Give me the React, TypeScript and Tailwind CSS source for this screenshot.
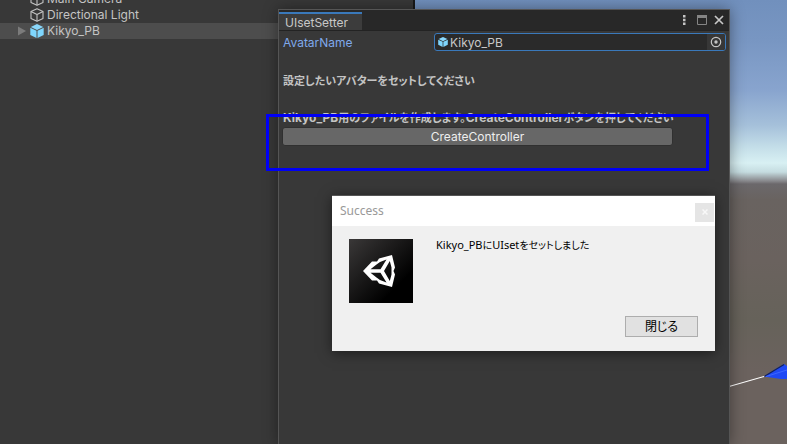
import React from 'react';

const unityFont = "font-['Inter','Noto_Sans_CJK_JP',sans-serif]";
const dialogFont = "font-['Noto_Sans','Noto_Sans_CJK_JP',sans-serif]";

function CubeOutline() {
  return (
    <svg viewBox="0 0 14 14" className="size-3.5 shrink-0" fill="none" stroke="#c4c4c4" strokeWidth="1.1" strokeLinejoin="round" aria-hidden="true">
      <path d="M7 .8 13 3.6v6.8L7 13.3 1 10.4V3.6Z" />
      <path d="M1 3.6 7 6.6l6-3M7 6.6v6.7" />
    </svg>
  );
}

function CubeSolid({ className }: { className: string }) {
  return (
    <svg viewBox="0 0 14 14" className={className} aria-hidden="true">
      <path d="M7 0 13.2 2.9 7 5.9.8 2.9Z" fill="#8ad8fb" />
      <path d="M.3 3.7 6.5 6.7V14L.3 11Z" fill="#7fd6fd" />
      <path d="M13.7 3.7 7.5 6.7V14l6.2-3Z" fill="#7fd6fd" />
    </svg>
  );
}

function HierarchyRow({ name, selected = false }: { name: string; selected?: boolean }) {
  return (
    <li className={`flex h-4 shrink-0 items-center pl-[18px] text-[12px] leading-4 text-[#c4c4c4] ${selected ? 'bg-[#4d4d4d]' : ''}`}>
      <span className="flex w-3 shrink-0">
        {selected && (
          <svg viewBox="0 0 8 10" className="h-2.5 w-2" aria-hidden="true">
            <path d="M0 .5 8 5 0 9.5Z" fill="#7b7b7b" />
          </svg>
        )}
      </span>
      {selected ? <CubeSolid className="size-3.5 shrink-0" /> : <CubeOutline />}
      <span className="pl-[3px]">{name}</span>
    </li>
  );
}

function Hierarchy() {
  return (
    <section className="w-[415px] shrink-0 border-r-2 border-[#191919] bg-[#383838]">
      <ul className="-mt-[9px] flex flex-col">
        <HierarchyRow name="Main Camera" />
        <HierarchyRow name="Directional Light" />
        <HierarchyRow name="Kikyo_PB" selected />
      </ul>
    </section>
  );
}

function SceneView() {
  return (
    <section className="flex flex-1 items-end justify-end bg-[linear-gradient(to_bottom,#7190bd_0px,#7896c2_40px,#88a4ce_90px,#a5c0da_125px,#c5dfe9_148px,#d8f0f3_163px,#c5dce0_172px,#88888c_181px,#6b686b_184px,#696360_200px,#6a625e_260px,#66625a_320px,#6b625e_370px,#6b625e_444px)]">
      <svg viewBox="0 0 58 30" className="mb-[52px] h-[30px] w-[58px]" aria-hidden="true">
        <path d="M0 24.5 35 14.5" stroke="#fff" strokeWidth="1.1" />
        <path d="M35 14.5 55 2l3 2v13H52Z" fill="#1f49f5" />
        <path d="M36 14 55 2.5" stroke="#10205f" strokeWidth="1.2" />
        <path d="M37 14.5 58 8" stroke="#3d67ff" />
      </svg>
    </section>
  );
}

function SetterWindow() {
  return (
    <section className="absolute top-[9px] right-[57px] -bottom-px left-[278px] flex flex-col border border-[#555] bg-[#383838] shadow-[0_0_14px_rgba(0,0,0,0.4)]">
      <header className="flex h-[21px] shrink-0 items-end border-b border-[#232323] bg-[#282828]">
        <h1 className="h-[18px] w-[83px] border-t-2 border-[#3a79bb] bg-[#3c3c3c] pl-1.5 text-[12px] leading-[18px] text-[#c8c8c8]">UIsetSetter</h1>
        <div className="ml-auto flex h-5 items-center gap-[11px] pr-[5px]">
          <button type="button" aria-label="Menu" className="flex">
            <svg viewBox="0 0 3 10" className="h-2.5 w-[3px]" fill="#c4c4c4" aria-hidden="true">
              <path d="M0 0h2.5v2.5H0ZM0 3.8h2.5v2.5H0ZM0 7.5h2.5V10H0Z" />
            </svg>
          </button>
          <button type="button" aria-label="Maximize" className="flex">
            <svg viewBox="0 0 10 10" className="size-2.5" aria-hidden="true">
              <path d="M.5 .5h9v9h-9Z" fill="none" stroke="#858585" />
              <path d="M0 0h10v3H0Z" fill="#858585" />
            </svg>
          </button>
          <button type="button" aria-label="Close" className="-ml-1 flex">
            <svg viewBox="0 0 10 10" className="size-2.5" stroke="#c8c8c8" strokeWidth="1.7" aria-hidden="true">
              <path d="M1 1l8 8M9 1 1 9" />
            </svg>
          </button>
        </div>
      </header>
      <div className="flex flex-col px-[3px] pt-0.5 text-[12px]">
        <div className="flex h-[18px] items-center">
          <label htmlFor="avatar" className="w-[152px] shrink-0 pt-0.5 pl-px leading-[18px] text-[#7fa9ec]">AvatarName</label>
          <div className="flex h-[18px] min-w-0 flex-1 items-center overflow-hidden rounded-[3px] border border-[#3a79bb] bg-[#2a2a2a] pl-[3px]">
            <CubeSolid className="size-2.5 shrink-0" />
            <input id="avatar" defaultValue="Kikyo_PB" className="h-4 min-w-0 flex-1 bg-transparent pt-px pl-0.5 text-[#c8c8c8] outline-none" />
            <button type="button" aria-label="Select object" className="flex h-4 w-[18px] items-center justify-center bg-[#373737]">
              <svg viewBox="0 0 12 12" className="size-3" aria-hidden="true">
                <circle cx="6" cy="6" r="4.7" fill="none" stroke="#c4c4c4" strokeWidth="1.2" />
                <circle cx="6" cy="6" r="1.7" fill="#c4c4c4" />
              </svg>
            </button>
          </div>
        </div>
        <p className="mt-5 h-[18px] pl-px text-[11px] leading-5 font-bold whitespace-nowrap text-[#c4c4c4] [font-feature-settings:'palt']">設定したいアバターをセットしてください</p>
        <p className="mt-5 h-[18px] pl-px text-[11px] leading-[18px] font-bold whitespace-nowrap text-[#c4c4c4] [font-feature-settings:'palt']">
          <span className="text-[12px]">Kikyo_PB</span>用のファイルを作成します。<span className="text-[12px]">CreateController</span>ボタンを押してください
        </p>
        <button type="button" className="mr-[53px] h-[19px] rounded-[3px] border border-[#303030] bg-[#676767] text-[12px] leading-[17px] text-[#eee]">CreateController</button>
      </div>
    </section>
  );
}

function UnityIcon() {
  return (
    <svg viewBox="0 0 64 64" className="size-16 shrink-0" role="img" aria-label="Unity">
      <defs>
        <linearGradient id="tile" x1="0" y1="0" x2="1" y2="1">
          <stop offset="0" stopColor="#3a3838" />
          <stop offset=".75" stopColor="#000" />
        </linearGradient>
      </defs>
      <path d="M0 0h64v64H0Z" fill="url(#tile)" />
      <path
        fill="#fff"
        fillRule="evenodd"
        d="M14 32 23 22.5H28L30 19.5 43 16 46 28.5 44.5 32 46 35.5 43 48 30 44.5 28 41.5H23ZM21.5 30.3H31.5L37.5 20.5 31 23 27.5 25.5ZM21.5 33.7 27.5 38.5 31 41 37.5 43.5 31.5 33.7ZM35 32 40.8 42 42.5 35.5V28.5L40.8 22Z"
      />
    </svg>
  );
}

function SuccessDialog() {
  return (
    <section role="dialog" aria-labelledby="dialog-title" className={`absolute top-[195px] right-[72px] left-[332px] flex flex-col border-t border-[#555] bg-[#f0f0f0] shadow-[0_2px_12px_rgba(0,0,0,0.5)] ${dialogFont}`}>
      <header className="flex h-[30px] items-center bg-white pr-px pl-2">
        <h2 id="dialog-title" className="text-[12px] leading-4 text-[#999]">Success</h2>
        <button type="button" aria-label="Close" className="mt-0.5 ml-auto flex size-[19px] items-center justify-center bg-[#e5e5e5]">
          <svg viewBox="0 0 6 6" className="size-1.5" stroke="#f8f8f8" strokeWidth="1.5" aria-hidden="true">
            <path d="M.5 .5l5 5M5.5 .5l-5 5" />
          </svg>
        </button>
      </header>
      <div className="flex gap-[23px] pt-[13px] pl-[17px]">
        <UnityIcon />
        <p className="text-[10px] leading-3 whitespace-nowrap text-black [font-feature-settings:'palt']">
          <span className="text-[11px]">Kikyo_PB</span>に<span className="text-[11px]">UIset</span>をセットしました
        </p>
      </div>
      <div className="flex justify-end pt-[13px] pr-[17px] pb-3.5">
        <button type="button" className="h-[21px] w-[73px] border border-[#adadad] bg-[#e1e1e1] text-[12px] leading-[19px] text-black [font-feature-settings:'palt']">閉じる</button>
      </div>
    </section>
  );
}

export default function App() {
  return (
    <main className={`relative flex h-screen overflow-hidden bg-[#191919] ${unityFont}`}>
      <Hierarchy />
      <SceneView />
      <SetterWindow />
      <div className="pointer-events-none absolute top-[114px] right-[78px] left-[266px] h-[57px] border-[3px] border-[#0000f5]" />
      <SuccessDialog />
    </main>
  );
}
